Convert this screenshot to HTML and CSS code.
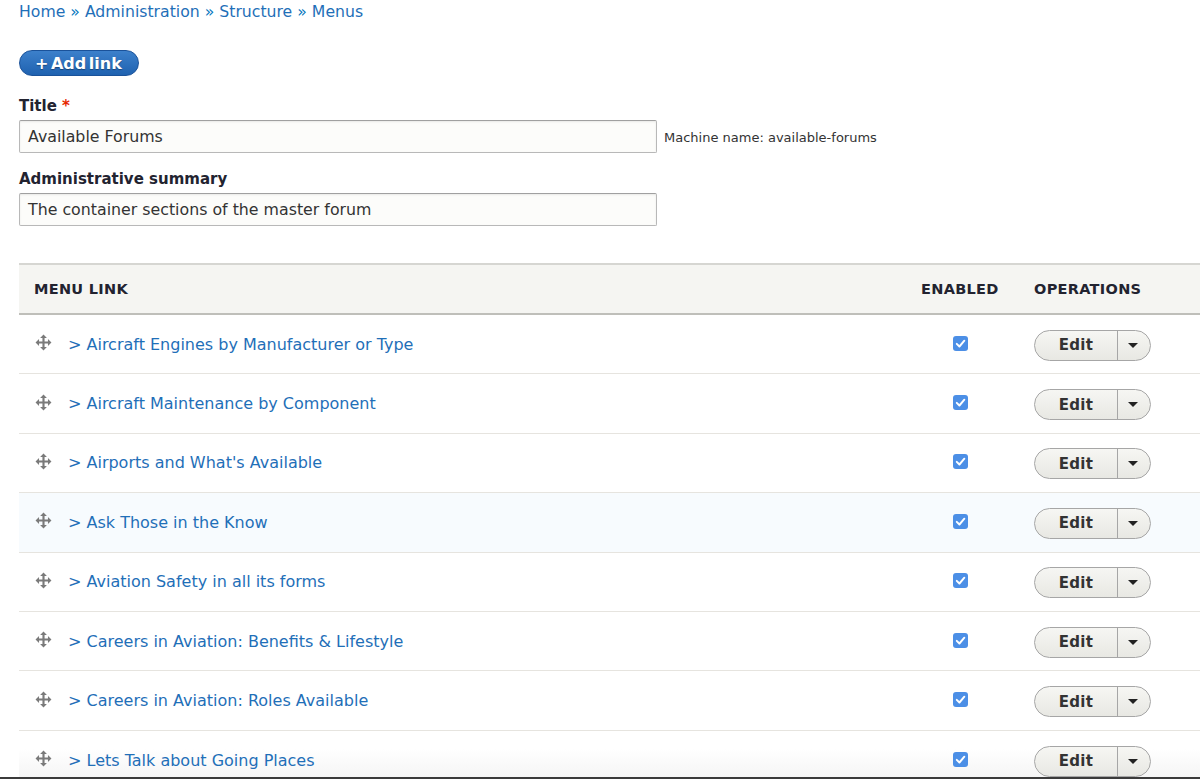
FILE: index.html
```html
<!DOCTYPE html>
<html lang="en">
<head>
<meta charset="utf-8">
<title>Edit menu Available Forums</title>
<link rel="stylesheet" href="styles.css">
</head>
<body>
<div class="page">
  <nav class="breadcrumb">
    <a href="#">Home</a> » <a href="#">Administration</a> » <a href="#">Structure</a> » <a href="#">Menus</a>
  </nav>

  <div class="actions">
    <a class="btn-primary" href="#">+ Add link</a>
  </div>

  <div class="field field-title">
    <label class="label">Title <span class="req">*</span></label>
    <div class="field-row">
      <div class="input">Available Forums</div>
      <span class="machine">Machine name: available-forums</span>
    </div>
  </div>

  <div class="field field-summary">
    <label class="label">Administrative summary</label>
    <div class="field-row">
      <div class="input">The container sections of the master forum</div>
    </div>
  </div>

  <div class="table">
    <div class="thead">
      <div class="c-link">MENU LINK</div>
      <div class="c-enabled">ENABLED</div>
      <div class="c-ops">OPERATIONS</div>
    </div>

    <div class="row">
      <div class="c-link"><span class="drag"><svg viewBox="0 0 16 16"><path class="arm" d="M8 3v10M3 8h10"/><path d="M8 0.5l3.2 3.3H4.8zM8 15.5l3.2-3.3H4.8zM0.5 8l3.3-3.2v6.4zM15.5 8l-3.3-3.2v6.4z"/></svg></span><a href="#">&gt; Aircraft Engines by Manufacturer or Type</a></div>
      <div class="c-enabled"><span class="check"><svg viewBox="0 0 14 14"><path d="M3.5 7.3 L6 9.8 L10.6 4.4"/></svg></span></div>
      <div class="c-ops"><div class="dropbutton"><span class="db-main">Edit</span><span class="db-toggle"><span class="tri"></span></span></div></div>
    </div>

    <div class="row">
      <div class="c-link"><span class="drag"><svg viewBox="0 0 16 16"><path class="arm" d="M8 3v10M3 8h10"/><path d="M8 0.5l3.2 3.3H4.8zM8 15.5l3.2-3.3H4.8zM0.5 8l3.3-3.2v6.4zM15.5 8l-3.3-3.2v6.4z"/></svg></span><a href="#">&gt; Aircraft Maintenance by Component</a></div>
      <div class="c-enabled"><span class="check"><svg viewBox="0 0 14 14"><path d="M3.5 7.3 L6 9.8 L10.6 4.4"/></svg></span></div>
      <div class="c-ops"><div class="dropbutton"><span class="db-main">Edit</span><span class="db-toggle"><span class="tri"></span></span></div></div>
    </div>

    <div class="row">
      <div class="c-link"><span class="drag"><svg viewBox="0 0 16 16"><path class="arm" d="M8 3v10M3 8h10"/><path d="M8 0.5l3.2 3.3H4.8zM8 15.5l3.2-3.3H4.8zM0.5 8l3.3-3.2v6.4zM15.5 8l-3.3-3.2v6.4z"/></svg></span><a href="#">&gt; Airports and What's Available</a></div>
      <div class="c-enabled"><span class="check"><svg viewBox="0 0 14 14"><path d="M3.5 7.3 L6 9.8 L10.6 4.4"/></svg></span></div>
      <div class="c-ops"><div class="dropbutton"><span class="db-main">Edit</span><span class="db-toggle"><span class="tri"></span></span></div></div>
    </div>

    <div class="row row-hover">
      <div class="c-link"><span class="drag"><svg viewBox="0 0 16 16"><path class="arm" d="M8 3v10M3 8h10"/><path d="M8 0.5l3.2 3.3H4.8zM8 15.5l3.2-3.3H4.8zM0.5 8l3.3-3.2v6.4zM15.5 8l-3.3-3.2v6.4z"/></svg></span><a href="#">&gt; Ask Those in the Know</a></div>
      <div class="c-enabled"><span class="check"><svg viewBox="0 0 14 14"><path d="M3.5 7.3 L6 9.8 L10.6 4.4"/></svg></span></div>
      <div class="c-ops"><div class="dropbutton"><span class="db-main">Edit</span><span class="db-toggle"><span class="tri"></span></span></div></div>
    </div>

    <div class="row">
      <div class="c-link"><span class="drag"><svg viewBox="0 0 16 16"><path class="arm" d="M8 3v10M3 8h10"/><path d="M8 0.5l3.2 3.3H4.8zM8 15.5l3.2-3.3H4.8zM0.5 8l3.3-3.2v6.4zM15.5 8l-3.3-3.2v6.4z"/></svg></span><a href="#">&gt; Aviation Safety in all its forms</a></div>
      <div class="c-enabled"><span class="check"><svg viewBox="0 0 14 14"><path d="M3.5 7.3 L6 9.8 L10.6 4.4"/></svg></span></div>
      <div class="c-ops"><div class="dropbutton"><span class="db-main">Edit</span><span class="db-toggle"><span class="tri"></span></span></div></div>
    </div>

    <div class="row">
      <div class="c-link"><span class="drag"><svg viewBox="0 0 16 16"><path class="arm" d="M8 3v10M3 8h10"/><path d="M8 0.5l3.2 3.3H4.8zM8 15.5l3.2-3.3H4.8zM0.5 8l3.3-3.2v6.4zM15.5 8l-3.3-3.2v6.4z"/></svg></span><a href="#">&gt; Careers in Aviation: Benefits &amp; Lifestyle</a></div>
      <div class="c-enabled"><span class="check"><svg viewBox="0 0 14 14"><path d="M3.5 7.3 L6 9.8 L10.6 4.4"/></svg></span></div>
      <div class="c-ops"><div class="dropbutton"><span class="db-main">Edit</span><span class="db-toggle"><span class="tri"></span></span></div></div>
    </div>

    <div class="row">
      <div class="c-link"><span class="drag"><svg viewBox="0 0 16 16"><path class="arm" d="M8 3v10M3 8h10"/><path d="M8 0.5l3.2 3.3H4.8zM8 15.5l3.2-3.3H4.8zM0.5 8l3.3-3.2v6.4zM15.5 8l-3.3-3.2v6.4z"/></svg></span><a href="#">&gt; Careers in Aviation: Roles Available</a></div>
      <div class="c-enabled"><span class="check"><svg viewBox="0 0 14 14"><path d="M3.5 7.3 L6 9.8 L10.6 4.4"/></svg></span></div>
      <div class="c-ops"><div class="dropbutton"><span class="db-main">Edit</span><span class="db-toggle"><span class="tri"></span></span></div></div>
    </div>

    <div class="row row-last">
      <div class="c-link"><span class="drag"><svg viewBox="0 0 16 16"><path class="arm" d="M8 3v10M3 8h10"/><path d="M8 0.5l3.2 3.3H4.8zM8 15.5l3.2-3.3H4.8zM0.5 8l3.3-3.2v6.4zM15.5 8l-3.3-3.2v6.4z"/></svg></span><a href="#">&gt; Lets Talk about Going Places</a></div>
      <div class="c-enabled"><span class="check"><svg viewBox="0 0 14 14"><path d="M3.5 7.3 L6 9.8 L10.6 4.4"/></svg></span></div>
      <div class="c-ops"><div class="dropbutton"><span class="db-main">Edit</span><span class="db-toggle"><span class="tri"></span></span></div></div>
    </div>
  </div>
</div>
<div class="window-edge"></div>
</body>
</html>
```

FILE: styles.css
```css
html, body {
  margin: 0;
  padding: 0;
  background: #fff;
  overflow: hidden;
}
body {
  font-family: "DejaVu Sans", "Lucida Grande", Verdana, sans-serif;
  color: #222330;
  font-size: 15px;
}
.page {
  padding: 0 0 0 19px;
  width: 1220px;
}
a {
  color: #0074bd;
  text-decoration: none;
}
.breadcrumb {
  color: #0074bd;
  font-size: 15.7px;
  line-height: 24px;
}
.breadcrumb a {
  color: #1f6fb8;
}
.actions {
  margin-top: 26px;
  height: 26px;
}
.btn-primary {
  display: inline-flex;
  align-items: center;
  height: 26px;
  padding: 0 16px 0 15px;
  border-radius: 13px;
  background: linear-gradient(#3c80cb, #1f62b0);
  border: 1px solid #1a529a;
  color: #fff;
  font-weight: bold;
  font-size: 16px;
  box-sizing: border-box;
  text-shadow: 0 1px 1px rgba(0,0,0,0.35);
  word-spacing: -3px;
}
.field-title {
  margin-top: 20px;
}
.field-summary {
  margin-top: 16px;
}
.label {
  display: block;
  font-weight: bold;
  font-size: 15px;
  line-height: 20px;
  color: #222330;
  margin-bottom: 4px;
}
.req {
  color: #e62600;
}
.field-row {
  display: flex;
  align-items: center;
  gap: 7px;
}
.input {
  width: 638px;
  height: 33px;
  box-sizing: border-box;
  border: 1px solid #b8b8b8;
  border-top-color: #a0a0a0;
  border-radius: 2px;
  background: #fcfcfa;
  box-shadow: inset 0 1px 2px rgba(0,0,0,0.08);
  padding: 0 8px;
  display: flex;
  align-items: center;
  font-size: 15.8px;
  color: #333;
}
.machine {
  font-size: 13px;
  color: #333;
  padding-top: 2px;
}
.table {
  margin-top: 37px;
  width: 1200px;
}
.thead {
  display: flex;
  align-items: center;
  height: 52px;
  box-sizing: border-box;
  background: #f5f5f2;
  border-top: 2px solid #d6d6d2;
  border-bottom: 2px solid #bfbfba;
  font-weight: bold;
  font-size: 14.5px;
  color: #222330;
  letter-spacing: 0.3px;
}
.c-link {
  width: 886px;
  box-sizing: border-box;
  padding-left: 15px;
  display: flex;
  align-items: center;
}
.c-enabled {
  width: 129px;
  box-sizing: border-box;
  padding-left: 16px;
}
.c-ops {
  flex: 1;
}
.row {
  display: flex;
  align-items: center;
  height: 59.4px;
  box-sizing: border-box;
  border-bottom: 1px solid #e6e4df;
}
.row-hover {
  background: #f7fbfe;
}
.row-last {
  background: linear-gradient(#fff 0%, #fff 30%, #f1f1f1 100%);
  border-bottom: none;
}
.drag {
  width: 17px;
  height: 17px;
  margin-left: 1px;
  margin-right: 16px;
  margin-top: -3px;
  display: inline-flex;
}
.drag svg {
  width: 17px;
  height: 17px;
  fill: #7a7a7a;
}
.drag .arm {
  stroke: #7a7a7a;
  stroke-width: 2;
  fill: none;
}
.c-link a {
  font-size: 16px;
  color: #1f6fb8;
}
.check {
  display: inline-flex;
  width: 15px;
  height: 15px;
  border-radius: 3px;
  background: #4c8fe6;
  margin-left: 32px;
  margin-top: 2px;
}
.check svg {
  width: 15px;
  height: 15px;
  fill: none;
  stroke: #fff;
  stroke-width: 1.8;
  stroke-linecap: round;
  stroke-linejoin: round;
}
.dropbutton {
  display: inline-flex;
  height: 31px;
  box-sizing: border-box;
  border: 1px solid #a6a6a6;
  border-radius: 16px;
  background: linear-gradient(#f6f6f3, #e8e8e3);
  overflow: hidden;
  width: 117px;
  margin-top: 2px;
}
.db-main {
  width: 82px;
  display: flex;
  align-items: center;
  justify-content: center;
  font-weight: bold;
  font-size: 15px;
  color: #333;
  letter-spacing: 0.3px;
  border-right: 1px solid #a6a6a6;
}
.db-toggle {
  flex: 1;
  display: flex;
  align-items: center;
  justify-content: center;
  padding-right: 2px;
}
.tri {
  width: 0;
  height: 0;
  border-left: 5px solid transparent;
  border-right: 5px solid transparent;
  border-top: 5px solid #222;
}
.window-edge {
  position: fixed;
  left: 0;
  right: 0;
  bottom: 0;
  height: 2px;
  background: #3b3b3b;
}
```
